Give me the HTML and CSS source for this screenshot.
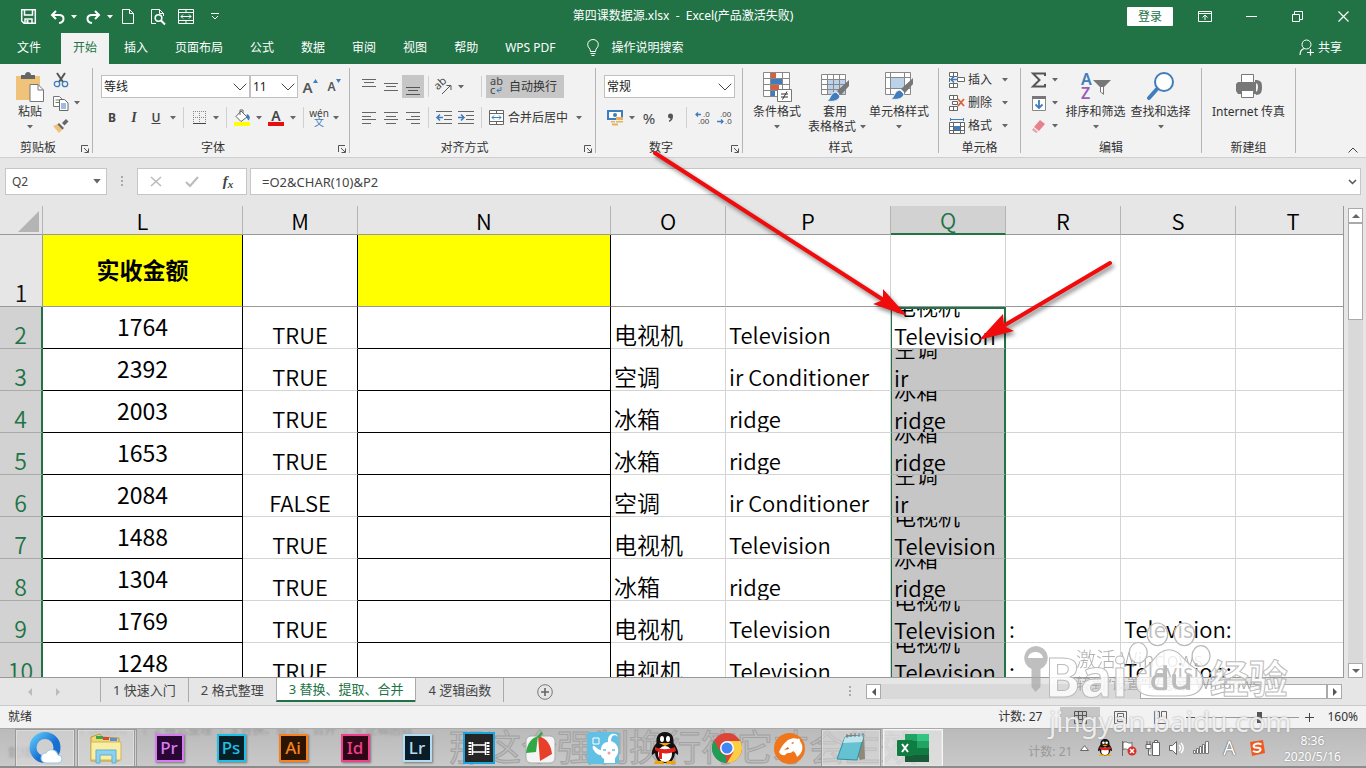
FILE: index.html
```html
<!DOCTYPE html>
<html lang="zh-CN">
<head>
<meta charset="utf-8">
<title>第四课数据源.xlsx - Excel</title>
<link rel="stylesheet" href="styles.css">
</head>
<body>
<svg class="defs" aria-hidden="true">
  <symbol id="caret" viewBox="0 0 6 4"><path d="M0 0h6L3 3.5z" fill="currentColor"/></symbol>
  <symbol id="chev" viewBox="0 0 14 8"><path d="M.7.7 7 7 13.300.7" fill="none" stroke="#444"/></symbol>
  <symbol id="launch" viewBox="0 0 8 8"><path d="M.5 7V.5H7M3 3l4 4M7.500 3.500v4h-4" fill="none" stroke="#555"/></symbol>
  <symbol id="brush" viewBox="0 0 24 24"><path d="M23 1v6l-8 9-4-4z" fill="#777"/><path d="M10 13l4 4c-1 5-7 6-13 5 4-2 3-8 9-9z" fill="#3f7dbd" stroke="#f2f2f2"/></symbol>
</svg>
<div class="app">
  <header class="titlebar">
    <div class="quick">
      <button aria-label="保存"><svg width="15" height="15" viewBox="0 0 15 15"><path d="M.7.700h13.600v13.600H3L.7 12z M3.500 1v5h8V1M4 14v-4h7v4" fill="none" stroke="#fff" stroke-width="1.500"/><path d="M5.500 11h2v3h-2z" fill="#fff"/></svg></button>
      <button aria-label="撤消"><svg width="15" height="14" viewBox="0 0 15 14"><path d="M6 1 2 5l4 4M2.500 5H9c6 0 6 7 0 8" fill="none" stroke="#fff" stroke-width="2"/></svg><svg class="caret"><use href="#caret"/></svg></button>
      <button aria-label="恢复"><svg width="15" height="14" viewBox="0 0 15 14"><path d="M9 1l4 4-4 4M12.500 5H6c-6 0-6 7 0 8" fill="none" stroke="#fff" stroke-width="2"/></svg><svg class="caret"><use href="#caret"/></svg></button>
      <button aria-label="新建"><svg width="12" height="15" viewBox="0 0 12 15"><path d="M.5.500h7l4 4v10H.5zM7.500.500v4h4" fill="none" stroke="#fff"/></svg></button>
      <button aria-label="打印预览"><svg width="15" height="16" viewBox="0 0 15 16"><path d="M5 14.500H.5V.500h8l4 4V7M8.500.500v4h4" fill="none" stroke="#fff"/><circle cx="7.500" cy="9" r="3.300" fill="none" stroke="#fff" stroke-width="1.600"/><path d="M10 11.500l4 4" stroke="#fff" stroke-width="2"/></svg></button>
      <button aria-label="合并"><svg width="16" height="15" viewBox="0 0 16 15"><path d="M.5.500h15v14H.5zM.5 3.500h15M.5 11.500h15M8 .5v3M8 11.500v3M3 7.500h10M5 5.500l-2 2 2 2M11 5.500l2 2-2 2" fill="none" stroke="#fff"/></svg></button>
      <button aria-label="自定义"><svg width="8" height="7" viewBox="0 0 8 7"><path d="M0 .5h8M1 3l3 3 3-3" fill="none" stroke="#fff"/></svg></button>
    </div>
    <div class="doc">第四课数据源.xlsx&nbsp; -&nbsp; Excel(产品激活失败)</div>
    <div class="win">
      <button class="login">登录</button>
      <button aria-label="功能区选项"><svg width="14" height="11" viewBox="0 0 14 11"><path d="M.5.500h13v10H.5zM.5 2.500h13M7 9V4.500M4.500 6.500 7 4l2.500 2.500" fill="none" stroke="#fff"/></svg></button>
      <button aria-label="最小化"><svg width="11" height="11" viewBox="0 0 11 11"><path d="M0 5.500h11" stroke="#fff"/></svg></button>
      <button aria-label="还原"><svg width="11" height="11" viewBox="0 0 11 11"><path d="M.5 3.500h7v7h-7zM2.500 3.500v-3h8v8h-3" fill="none" stroke="#fff"/></svg></button>
      <button aria-label="关闭"><svg width="11" height="11" viewBox="0 0 11 11"><path d="M.5.500l10 10M10.500.500l-10 10" stroke="#fff" stroke-width="1.200"/></svg></button>
    </div>
  </header>
  <nav class="tabs">
    <button class="file">文件</button>
    <button class="on">开始</button>
    <button>插入</button>
    <button>页面布局</button>
    <button>公式</button>
    <button>数据</button>
    <button>审阅</button>
    <button>视图</button>
    <button>帮助</button>
    <button>WPS PDF</button>
    <button class="tell"><svg width="12" height="17" viewBox="0 0 12 17"><path d="M3.500 12.500C3.500 9 .7 9 .7 5.500a5.300 5 0 0 1 10.600 0C11.300 9 8.500 9 8.500 12.500zM3.500 14.500h5M4.500 16.500h3" fill="none" stroke="#fff"/></svg>操作说明搜索</button>
    <button class="share"><svg width="15" height="17" viewBox="0 0 15 17"><circle cx="7.500" cy="5.500" r="4.500" fill="none" stroke="#fff"/><path d="M1 16c0-4 2-6 4.500-6.500M11.500 10v6.500M8 13.500h7" fill="none" stroke="#fff" stroke-width="1.200"/></svg>共享</button>
  </nav>

  <section class="ribbon" aria-label="开始">
    <div class="group g-clip">
      <div class="body">
        <button class="big paste"><svg width="30" height="30" viewBox="0 0 30 30"><path d="M1 4h24v24H1z" fill="#efc37a"/><path d="M6 3h4c0-4 6-4 6 0h4v4H6z" fill="#666"/><path d="M15 12.500h8l5.500 5.500v11.500H15z" fill="#fff" stroke="#777"/><path d="M23 12.500V18h5.500" fill="none" stroke="#777"/></svg><span>粘贴</span><svg class="caret"><use href="#caret"/></svg></button>
        <div class="stack">
          <button aria-label="剪切"><svg width="16" height="16" viewBox="0 0 16 16"><path d="M4 1l6 9M12 1L6 10" stroke="#555" stroke-width="2"/><g fill="none" stroke="#3f7dbd" stroke-width="1.300"><circle cx="4" cy="12" r="2.700"/><circle cx="12" cy="12" r="2.700"/></g></svg></button>
          <button aria-label="复制"><svg width="16" height="16" viewBox="0 0 16 16"><path d="M.5 1.500h6l3 3v7h-9zM2.500 5h4M2.500 7.500h4" fill="#fff" stroke="#777"/><path d="M6.500 4.500h5l3.500 3.500v7.500H6.500z" fill="#fff" stroke="#666"/><path d="M8 9h5M8 11h5M8 13h5" stroke="#3f7dbd"/></svg><svg class="caret"><use href="#caret"/></svg></button>
          <button aria-label="格式刷"><svg width="16" height="16" viewBox="0 0 16 16"><path d="M0 8l5-2 5 5-4 4z" fill="#efc37a"/><path d="M6 5l5 5-1.500 1.500-5-5zM9 5l4-4 2.500 2.500-4 4z" fill="#666"/></svg></button>
        </div>
      </div>
      <div class="foot">剪贴板<svg class="launch"><use href="#launch"/></svg></div>
    </div>

    <div class="group g-font">
      <div class="body rows">
        <div class="row">
          <label class="combo c-name"><select aria-label="字体"><option>等线</option></select><svg class="chev"><use href="#chev"/></svg></label>
          <label class="combo c-size"><select aria-label="字号"><option>11</option></select><svg class="chev"><use href="#chev"/></svg></label>
          <button class="w24 grow-l" aria-label="增大字号">A<svg class="up" width="5" height="4" viewBox="0 0 5 4"><path d="M0 4h5L2.500 0z" fill="#3f7dbd"/></svg></button>
          <button class="w24 grow-s" aria-label="减小字号">A<svg class="up" width="5" height="4" viewBox="0 0 5 4"><path d="M0 0h5L2.500 4z" fill="#3f7dbd"/></svg></button>
        </div>
        <div class="row">
          <button class="w22"><b>B</b></button>
          <button class="w22 it"><i>I</i></button>
          <button class="w22 un"><u>U</u></button>
          <button class="w12" aria-label="下划线选项"><svg class="caret"><use href="#caret"/></svg></button>
          <i class="vsep"></i>
          <button class="w22" aria-label="边框"><svg width="13" height="13" viewBox="0 0 13 13"><path d="M.5 0v12M6.500 0v12M12.500 0v12M0 .5h13M0 6.500h13" stroke="#888" stroke-dasharray="1 1"/><path d="M0 12.500h13" stroke="#444"/></svg></button>
          <button class="w12" aria-label="边框选项"><svg class="caret"><use href="#caret"/></svg></button>
          <i class="vsep"></i>
          <button class="w22" aria-label="填充颜色"><svg width="17" height="16" viewBox="0 0 17 16"><path d="M7 1l6 6-6 4.500L2 6.500zM6 5V0h3v3" fill="#fff" stroke="#666"/><path d="M13 4c4 2 3 5 1.500 6.500L12 7z" fill="#3f7dbd"/><path d="M0 12h16v4H0z" fill="#ff0"/></svg></button>
          <button class="w12" aria-label="填充选项"><svg class="caret"><use href="#caret"/></svg></button>
          <button class="w22 fcolor" aria-label="字体颜色">A</button>
          <button class="w12" aria-label="颜色选项"><svg class="caret"><use href="#caret"/></svg></button>
          <i class="vsep"></i>
          <button class="w22 wen">wén<em>文</em></button>
          <button class="w12" aria-label="拼音选项"><svg class="caret"><use href="#caret"/></svg></button>
        </div>
      </div>
      <div class="foot">字体<svg class="launch"><use href="#launch"/></svg></div>
    </div>

    <div class="group g-align">
      <div class="body rows">
        <div class="row">
          <button class="w22" aria-label="顶端对齐"><svg width="14" height="16" viewBox="0 0 14 16"><path d="M0 .5h14M2 3.500h10M0 7.500h14" stroke="#666"/></svg></button>
          <button class="w22" aria-label="垂直居中"><svg width="14" height="16" viewBox="0 0 14 16"><path d="M0 4.500h14M2 7.500h10M0 11.500h14" stroke="#666"/></svg></button>
          <button class="w22 pressed" aria-label="底端对齐"><svg width="14" height="16" viewBox="0 0 14 16"><path d="M0 8.500h14M2 11.500h10M0 15.500h14" stroke="#555"/></svg></button>
          <i class="vsep"></i>
          <button class="w22" aria-label="方向"><svg width="16" height="16" viewBox="0 0 16 16"><text x="0" y="9" font-size="11" fill="#444" transform="rotate(-42 4 8)">ab</text><path d="M6 15l8-8M10.500 6.500H15V11" fill="none" stroke="#555"/></svg></button>
          <button class="w12" aria-label="方向选项"><svg class="caret"><use href="#caret"/></svg></button>
          <i class="vsep far"></i>
          <button class="wide pressed"><svg width="15" height="17" viewBox="0 0 15 17"><text x="0" y="7" font-size="11" fill="#444">ab</text><text x="0" y="16" font-size="11" fill="#444">c</text><path d="M11 9v3.500H7M9 10.500l-2 2 2 2" fill="none" stroke="#3f7dbd"/></svg>自动换行</button>
        </div>
        <div class="row">
          <button class="w22" aria-label="左对齐"><svg width="14" height="12" viewBox="0 0 14 12"><path d="M0 .5h14M0 4.500h9M0 7.500h14M0 11.500h9" stroke="#666"/></svg></button>
          <button class="w22" aria-label="居中"><svg width="14" height="12" viewBox="0 0 14 12"><path d="M0 .5h14M2 4.500h10M0 7.500h14M2 11.500h10" stroke="#666"/></svg></button>
          <button class="w22" aria-label="右对齐"><svg width="14" height="12" viewBox="0 0 14 12"><path d="M0 .5h14M5 4.500h9M0 7.500h14M5 11.500h9" stroke="#666"/></svg></button>
          <i class="vsep"></i>
          <button class="w22" aria-label="减少缩进"><svg width="16" height="13" viewBox="0 0 16 13"><path d="M0 .5h16M8 4.500h8M8 8.500h8M0 12.500h16" stroke="#666"/><path d="M7 6.500H1M4 3.500l-3 3 3 3" fill="none" stroke="#3f7dbd" stroke-width="1.600"/></svg></button>
          <button class="w22" aria-label="增加缩进"><svg width="16" height="13" viewBox="0 0 16 13"><path d="M0 .5h16M8 4.500h8M8 8.500h8M0 12.500h16" stroke="#666"/><path d="M0 6.500h6M3 3.500l3 3-3 3" fill="none" stroke="#3f7dbd" stroke-width="1.600"/></svg></button>
          <i class="vsep"></i>
          <button class="wide"><svg width="15" height="15" viewBox="0 0 15 15"><path d="M.5.500h14v14H.5zM.5 3.500h14M.5 11.500h14M7.500.500v3M7.500 11.500v3" fill="#fff" stroke="#666"/><path d="M3 7.500h9M5 5.500l-2 2 2 2M10 5.500l2 2-2 2" fill="none" stroke="#3f7dbd"/></svg>合并后居中</button>
          <button class="w12" aria-label="合并选项"><svg class="caret"><use href="#caret"/></svg></button>
        </div>
      </div>
      <div class="foot">对齐方式<svg class="launch"><use href="#launch"/></svg></div>
    </div>

    <div class="group g-num">
      <div class="body rows">
        <div class="row">
          <label class="combo c-num"><select aria-label="数字格式"><option>常规</option></select><svg class="chev"><use href="#chev"/></svg></label>
        </div>
        <div class="row">
          <button class="w22" aria-label="会计数字格式"><svg width="17" height="16" viewBox="0 0 17 16"><path d="M1 1h14v8H1z" fill="#fff" stroke="#3f7dbd" stroke-width="2"/><circle cx="8" cy="5" r="2" fill="#3f7dbd"/><path d="M9 7h7v3H9zM9 11h7v1.500H9zM4 11h4v1.500H4zM5 13.500h6v2H5z" fill="#e5b15e"/></svg></button>
          <button class="w12" aria-label="货币选项"><svg class="caret"><use href="#caret"/></svg></button>
          <button class="w22 pct">%</button>
          <button class="w22 comma" aria-label="千位分隔样式"><svg width="6" height="8" viewBox="0 0 6 8"><path d="M0 2a2.500 2.500 0 0 1 5 0c0 3-1 5-4 6V6.500c1-.5 1.500-1 1.500-2A2.500 2.500 0 0 1 0 2z" fill="#555"/></svg></button>
          <i class="vsep"></i>
          <button class="w22" aria-label="增加小数位数"><svg width="15" height="14" viewBox="0 0 15 14"><text class="num" x="8" y="6" fill="#444">.0</text><text class="num" x="3" y="13" fill="#444">.00</text><path d="M6 3.500H1M3 1.500l-2 2 2 2" fill="none" stroke="#3f7dbd" stroke-width="1.300"/></svg></button>
          <button class="w22" aria-label="减少小数位数"><svg width="15" height="14" viewBox="0 0 15 14"><text class="num" x="3" y="6" fill="#444">.00</text><text class="num" x="8" y="13" fill="#444">.0</text><path d="M0 10.500h6M4 8.500l2 2-2 2" fill="none" stroke="#3f7dbd" stroke-width="1.300"/></svg></button>
        </div>
      </div>
      <div class="foot">数字<svg class="launch"><use href="#launch"/></svg></div>
    </div>

    <div class="group g-style">
      <div class="body">
        <button class="big"><svg width="30" height="30" viewBox="0 0 30 30"><path d="M1.500.500h26v24h-26zM1.500 6.500h26M1.500 12.500h26M1.500 18.500h26M8.500.500v24M20.500.500v24" fill="#fff" stroke="#888"/><path d="M9 1h5v5H9zM9 13h8v5H9z" fill="#d9603b"/><path d="M9 7h11v5H9zM9 19h4v5H9z" fill="#3f7dbd"/><path d="M15.500 17.500h14v12h-14z" fill="#fff" stroke="#777"/><path d="M19 22h7M19 25h7M25 19.500l-4.500 8" stroke="#333"/></svg><span>条件格式</span><svg class="caret"><use href="#caret"/></svg></button>
        <button class="big"><svg width="30" height="30" viewBox="0 0 30 30"><path d="M1.500 2.500h24v20h-24z" fill="#fff"/><path d="M8 8h18v15H8z" fill="#bcd2ea"/><path d="M1.500 2.500h24v20h-24zM1.500 7.500h24M1.500 12.500h24M1.500 17.500h24M7.500 2.500v20M13.500 2.500v20M19.500 2.500v20" fill="none" stroke="#888"/><use href="#brush" x="6" y="7" width="24" height="24"/></svg><span>套用</span><span class="second">表格格式<svg class="caret"><use href="#caret"/></svg></span></button>
        <button class="big"><svg width="30" height="30" viewBox="0 0 30 30"><path d="M1.500.500h25v22h-25zM1.500 5.500h25M1.500 16.500h25M6.500.500v22M20.500.500v22" fill="#fff" stroke="#888"/><path d="M7 6h13v10H7z" fill="#bcd2ea"/><use href="#brush" x="6" y="5" width="24" height="24"/></svg><span>单元格样式</span><svg class="caret"><use href="#caret"/></svg></button>
      </div>
      <div class="foot">样式</div>
    </div>

    <div class="group g-cell">
      <div class="body">
        <div class="stack text">
          <button><svg width="16" height="16" viewBox="0 0 16 16"><path d="M.5.500h8v4h-8zM4.500.500v4M.5 11.500h8v4h-8zM4.500 11.500v4M8.500 5.500h7v4h-7zM.5 10V6" fill="#fff" stroke="#666"/><path d="M9 7.500H2M5 4.500l-3 3 3 3" fill="none" stroke="#3f7dbd" stroke-width="1.600"/></svg>插入<svg class="caret"><use href="#caret"/></svg></button>
          <button><svg width="16" height="16" viewBox="0 0 16 16"><path d="M.5.500h8v4h-8zM4.500.500v4M.5 11.500h8v4h-8zM4.500 11.500v4M3.500 6.500h5v3h-5z" fill="#fff" stroke="#666"/><path d="M9 4l6 7M15 4l-6 7" stroke="#d9603b" stroke-width="1.800"/></svg>删除<svg class="caret"><use href="#caret"/></svg></button>
          <button><svg width="16" height="16" viewBox="0 0 16 16"><path d="M.5 4.500h15v11H.5zM.5 8.500h15M.5 12.500h15M4.500 4.500v11M11.500 4.500v11" fill="#fff" stroke="#666"/><path d="M5 8h6v4H5z" fill="#3f7dbd"/><path d="M2 1.500h12M1.500 0v3M14.500 0v3" stroke="#3f7dbd"/></svg>格式<svg class="caret"><use href="#caret"/></svg></button>
        </div>
      </div>
      <div class="foot">单元格</div>
    </div>

    <div class="group g-edit">
      <div class="body">
        <div class="stack">
          <button aria-label="自动求和"><svg width="16" height="16" viewBox="0 0 16 16"><path d="M14 4V1.500H2L8.500 8 2 14.500h12V12" fill="none" stroke="#555" stroke-width="2"/></svg><svg class="caret"><use href="#caret"/></svg></button>
          <button aria-label="填充"><svg width="16" height="16" viewBox="0 0 16 16"><path d="M1.500 1.500h13v14h-13z" fill="#fff" stroke="#888"/><path d="M1 1h14v3H1z" fill="#777"/><path d="M8 5v8M4.500 9.500 8 13l3.500-3.500" fill="none" stroke="#3f7dbd" stroke-width="1.800"/></svg><svg class="caret"><use href="#caret"/></svg></button>
          <button aria-label="清除"><svg width="16" height="16" viewBox="0 0 16 16"><path d="M9 2l5 4-6 7-5-4z" fill="#e8808f"/><path d="M2.500 10l4.500 4-2 1-4-3z" fill="#e8a2ac"/></svg><svg class="caret"><use href="#caret"/></svg></button>
        </div>
        <button class="big"><svg width="30" height="30" viewBox="0 0 30 30"><text x="0" y="13" font-size="16" font-weight="600" fill="#3f7dbd">A</text><text x="0" y="27" font-size="16" font-weight="600" fill="#9a5fb5">Z</text><path d="M12 8h18l-7 7v8l-4-3v-5z" fill="#777"/><path d="M20 15h2v6l-2-1z" fill="#fff"/></svg><span>排序和筛选</span><svg class="caret"><use href="#caret"/></svg></button>
        <button class="big"><svg width="30" height="30" viewBox="0 0 30 30"><circle cx="18" cy="10" r="9" fill="#fff" stroke="#3f7dbd" stroke-width="2"/><path d="M11 17l-8 9" stroke="#3f7dbd" stroke-width="4" stroke-linecap="round"/></svg><span>查找和选择</span><svg class="caret"><use href="#caret"/></svg></button>
      </div>
      <div class="foot">编辑</div>
    </div>

    <div class="group g-new">
      <div class="body">
        <button class="big"><svg width="30" height="30" viewBox="0 0 30 30"><path d="M4 10h18v12H4l-2-3v-7z" fill="#777"/><path d="M21 8c6 0 7 2 7 7s-1 8-6 8l-1-3c2 0 3-2 3-5s-1-4-3-4z" fill="#777"/><path d="M7.500 2.500h12v8h-12zM7.500 18.500h12v7h-12z" fill="#fff" stroke="#777"/></svg><span>Internet 传真</span></button>
      </div>
      <div class="foot">新建组</div>
    </div>
    <button class="collapse" aria-label="折叠功能区"><svg width="10" height="6" viewBox="0 0 10 6"><path d="M.5 5.500 5 1l4.500 4.500" fill="none" stroke="#444"/></svg></button>
  </section>

  <div class="formula">
    <label class="namebox"><input value="Q2" aria-label="名称框"><svg class="caret big-caret"><use href="#caret"/></svg></label>
    <span class="dots"></span>
    <div class="fx">
      <button aria-label="取消"><svg width="12" height="11" viewBox="0 0 12 11"><path d="M1 1l10 9M11 1L1 10" stroke="#bbb" stroke-width="1.600"/></svg></button>
      <button aria-label="输入"><svg width="14" height="11" viewBox="0 0 14 11"><path d="M1 6l4 4 8-9" fill="none" stroke="#bbb" stroke-width="2"/></svg></button>
      <button class="fxb">f<small>x</small></button>
    </div>
    <label class="fbar"><input value="=O2&amp;CHAR(10)&amp;P2" aria-label="编辑栏"><svg width="9" height="6" viewBox="0 0 9 6"><path d="M1 1l3.500 3.500L8 1" fill="none" stroke="#555" stroke-width="1.500"/></svg></label>
  </div>

  <main class="sheet">
    <div class="gridwrap">
      <table class="grid">
        <colgroup><col class="k-row"><col class="k-l"><col class="k-m"><col class="k-n"><col class="k-m"><col class="k-p"><col class="k-m"><col class="k-m"><col class="k-m"><col></colgroup>
        <thead><tr><th class="corner"><svg width="21" height="21" viewBox="0 0 21 21"><path d="M21 0v21H0z" fill="#b4b4b4"/></svg></th><th>L</th><th>M</th><th>N</th><th>O</th><th>P</th><th class="sel">Q</th><th>R</th><th>S</th><th>T</th></tr></thead>
        <tbody>
          <tr class="first"><th><div>1</div></th><td class="y"><div>实收金额</div></td><td class="m"></td><td class="y"></td><td></td><td></td><td></td><td></td><td></td><td></td></tr>
          <tr><th><div>2</div></th><td class="l"><div>1764</div></td><td class="m"><div>TRUE</div></td><td class="n"></td><td><div>电视机</div></td><td class="en"><div>Television</div></td><td class="q active"><div>电视机<br>Television</div></td><td></td><td></td><td></td></tr>
          <tr><th><div>3</div></th><td class="l"><div>2392</div></td><td class="m"><div>TRUE</div></td><td class="n"></td><td><div>空调</div></td><td class="en"><div>ir Conditioner</div></td><td class="q"><div>空调<br>ir</div></td><td></td><td></td><td></td></tr>
          <tr><th><div>4</div></th><td class="l"><div>2003</div></td><td class="m"><div>TRUE</div></td><td class="n"></td><td><div>冰箱</div></td><td class="en"><div>ridge</div></td><td class="q"><div>冰箱<br>ridge</div></td><td></td><td></td><td></td></tr>
          <tr><th><div>5</div></th><td class="l"><div>1653</div></td><td class="m"><div>TRUE</div></td><td class="n"></td><td><div>冰箱</div></td><td class="en"><div>ridge</div></td><td class="q"><div>冰箱<br>ridge</div></td><td></td><td></td><td></td></tr>
          <tr><th><div>6</div></th><td class="l"><div>2084</div></td><td class="m"><div>FALSE</div></td><td class="n"></td><td><div>空调</div></td><td class="en"><div>ir Conditioner</div></td><td class="q"><div>空调<br>ir</div></td><td></td><td></td><td></td></tr>
          <tr><th><div>7</div></th><td class="l"><div>1488</div></td><td class="m"><div>TRUE</div></td><td class="n"></td><td><div>电视机</div></td><td class="en"><div>Television</div></td><td class="q"><div>电视机<br>Television</div></td><td></td><td></td><td></td></tr>
          <tr><th><div>8</div></th><td class="l"><div>1304</div></td><td class="m"><div>TRUE</div></td><td class="n"></td><td><div>冰箱</div></td><td class="en"><div>ridge</div></td><td class="q"><div>冰箱<br>ridge</div></td><td></td><td></td><td></td></tr>
          <tr><th><div>9</div></th><td class="l"><div>1769</div></td><td class="m"><div>TRUE</div></td><td class="n"></td><td><div>电视机</div></td><td class="en"><div>Television</div></td><td class="q"><div>电视机<br>Television</div></td><td class="en"><div>:</div></td><td class="en"><div>Television:</div></td><td></td></tr>
          <tr><th><div>10</div></th><td class="l"><div>1248</div></td><td class="m"><div>TRUE</div></td><td class="n"></td><td><div>电视机</div></td><td class="en"><div>Television</div></td><td class="q"><div>电视机<br>Television</div></td><td class="en"><div>:</div></td><td class="en"><div>Television:</div></td><td></td></tr>
        </tbody>
      </table>
    </div>
    <div class="vscroll">
      <button aria-label="向上"><svg width="8" height="4" viewBox="0 0 8 4"><path d="M0 4h8L4 0z" fill="#666"/></svg></button>
      <div class="thumb"></div>
      <button class="end" aria-label="向下"><svg width="8" height="4" viewBox="0 0 8 4"><path d="M0 0h8L4 4z" fill="#666"/></svg></button>
    </div>
  </main>

  <div class="sheetbar">
    <button class="nav" aria-label="上一张"><svg width="4" height="8" viewBox="0 0 4 8"><path d="M4 0v8L0 4z" fill="#bbb"/></svg></button>
    <button class="nav" aria-label="下一张"><svg width="4" height="8" viewBox="0 0 4 8"><path d="M0 0v8l4-4z" fill="#bbb"/></svg></button>
    <div class="stabs">
      <button>1 快速入门</button><button>2 格式整理</button><button class="on">3 替换、提取、合并</button><button>4 逻辑函数</button>
    </div>
    <button class="add" aria-label="新工作表"><svg width="16" height="16" viewBox="0 0 16 16"><circle cx="8" cy="8" r="7.300" fill="none" stroke="#777"/><path d="M8 4v8M4 8h8" stroke="#666" stroke-width="1.600"/></svg></button>
    <span class="dots"></span>
    <div class="hscroll">
      <button aria-label="向左"><svg width="4" height="8" viewBox="0 0 4 8"><path d="M4 0v8L0 4z" fill="#555"/></svg></button>
      <div class="thumb"></div>
      <button aria-label="向右"><svg width="4" height="8" viewBox="0 0 4 8"><path d="M0 0v8l4-4z" fill="#555"/></svg></button>
    </div>
  </div>

  <footer class="status">
    <span>就绪</span>
    <span class="count">计数: 27</span>
    <div class="views">
      <button class="pressed" aria-label="普通"><svg width="13" height="13" viewBox="0 0 13 13"><path d="M.5.500h12v12H.5zM.5 4.500h12M.5 8.500h12M4.500.500v12M8.500.500v12" fill="none" stroke="#555"/></svg></button>
      <button aria-label="页面布局"><svg width="13" height="13" viewBox="0 0 13 13"><path d="M.5.500h12v12H.5zM3.500 2.500h6v8h-6zM5 5.500h3M5 7.500h3" fill="none" stroke="#666"/></svg></button>
      <button aria-label="分页预览"><svg width="13" height="13" viewBox="0 0 13 13"><path d="M.5.500h5v7h-5zM7.500.500h5v7h-5zM.5 7v5.500h12V7" fill="none" stroke="#666"/></svg></button>
    </div>
    <button class="zoomb" aria-label="缩小"><svg width="9" height="9" viewBox="0 0 9 9"><path d="M0 4.500h9" stroke="#555"/></svg></button>
    <input class="zoom" type="range" min="10" max="200" value="125" aria-label="缩放">
    <button class="zoomb" aria-label="放大"><svg width="9" height="9" viewBox="0 0 9 9"><path d="M0 4.500h9M4.500 0v9" stroke="#444"/></svg></button>
    <span class="pctv">160%</span>
  </footer>

  <div class="taskbar">
    <div class="ghost">1 快速入门 │ 2 格式整理 │ 3 替换、提取、合并 │ 4 逻辑函数</div>
    <div class="ghost low">就绪</div>
    <div class="subtitle">那这个强制换行符它才会生效</div>
    <div class="apps">
      <button class="open" aria-label="QQ浏览器"><svg width="34" height="34" viewBox="0 0 34 34"><defs><linearGradient id="qb" x1="0" y1="0" x2="1" y2="1"><stop offset="0" stop-color="#5cc4f6"/><stop offset=".6" stop-color="#176fd0"/></linearGradient></defs><circle cx="17" cy="16.500" r="12" fill="none" stroke="url(#qb)" stroke-width="7"/><path d="M18 32a5 5 0 0 1 0-10 6.500 6.500 0 0 1 12 2 4 4 0 0 1 0 8z" fill="#fff" stroke="#9cc4e8"/></svg></button>
      <button class="open stackd" aria-label="资源管理器"><svg width="34" height="32" viewBox="0 0 34 32"><path d="M2 5l9-3 2 3 17 1v23H2z" fill="#f1d774" stroke="#b79b3b"/><path d="M7 4h7v3H7z" fill="#3da64a"/><path d="M14 5h6v3h-6z" fill="#d64a3a"/><path d="M21 6h7v3h-7z" fill="#5b8ede"/><path d="M2 10h30v18H2z" fill="#faeea2" stroke="#cdb55a"/><path d="M7 31V18h20v13h-4v-8H11v8z" fill="#8fd0ee" stroke="#5eafd4"/></svg></button>
      <button aria-label="Premiere"><span class="adobe pr">Pr</span></button>
      <button aria-label="Photoshop"><span class="adobe ps">Ps</span></button>
      <button aria-label="Illustrator"><span class="adobe ai">Ai</span></button>
      <button aria-label="InDesign"><span class="adobe id">Id</span></button>
      <button aria-label="Lightroom"><span class="adobe lr">Lr</span></button>
      <button aria-label="视频编辑"><svg width="32" height="32" viewBox="0 0 32 32"><path d="M1 1h30v30H1z" fill="#252525" stroke="#1ba4e0" stroke-width="2"/><path d="M7 10v13M25 10v13" stroke="#fff" stroke-width="3" stroke-dasharray="2 1"/><path d="M9.500 10v13M22.500 10v13M10 13h12M10 20h12" fill="none" stroke="#fff" stroke-width="1.500"/></svg></button>
      <button aria-label="录屏"><svg width="32" height="32" viewBox="0 0 32 32"><rect x="1" y="4" width="29" height="27" rx="5" fill="#f4f4f4" stroke="#aaa"/><path d="M1 21C2 11 7 6 13 4l-2 16z" fill="#31a843"/><path d="M13 4c9 2 13 9 14 18L15 29z" fill="#e6402a"/><path d="M12 5l4-5 2 1-3 5z" fill="#31a843"/></svg></button>
      <button aria-label="哔哩"><svg width="32" height="32" viewBox="0 0 32 32"><rect width="32" height="32" rx="3" fill="#62c0e4"/><path d="M21 10C20 0 30 0 31 5c-3-3-7-2-7 4 6 2 8 7 7 12-1 3-3 4-3 6v4H17v-4c-2-1-3-3-3-4-4 1-10-7-8-9 2-1 4 4 8 4 0-5 3-8 7-8z" fill="#fff"/><path d="M16 18h3M25 18h3" stroke="#62c0e4" stroke-width="1.500"/><circle cx="22" cy="21" r="1.500" fill="#f0a0a0"/><path d="M6 6h6v6H6z" fill="none" stroke="#fff"/></svg></button>
      <button aria-label="QQ"><svg width="28" height="32" viewBox="0 0 28 32"><path d="M14 0C7 0 5 5 5.500 11 3 14 0 19 1 23l3-2c1 7 4 10 10 10s9-3 10-10l3 2c1-4-2-9-4.500-12C23 5 21 0 14 0z" fill="#111"/><ellipse cx="14" cy="22" rx="7" ry="8" fill="#fff"/><ellipse cx="11" cy="7" rx="2" ry="3" fill="#fff"/><ellipse cx="17" cy="7" rx="2" ry="3" fill="#fff"/><path d="M8 11h12l-6 3z" fill="#f5a300"/><path d="M4 15c7 3 13 3 20 0l1 4c-4 2-10 3-14 2v6H8v-7l-4-2z" fill="#e2231a"/><path d="M4 29h8l1 3H3zM16 29h8l1 3H15z" fill="#f5a300"/></svg></button>
      <button aria-label="Chrome"><svg width="30" height="30" viewBox="0 0 30 30"><circle cx="15" cy="15" r="15" fill="#dc4437"/><path d="M2 7.500 9 20l4 2 2 8A15 15 0 0 1 2 7.500z" fill="#1c9e57"/><path d="M15 8h13.300A15 15 0 0 1 15 30l6.500-11z" fill="#fcce45"/><circle cx="15" cy="15" r="7" fill="#fff"/><circle cx="15" cy="15" r="5.500" fill="#4286f5"/></svg></button>
      <button aria-label="猎豹"><svg width="31" height="31" viewBox="0 0 31 31"><circle cx="15.500" cy="15.500" r="15.500" fill="#f0761c"/><path d="M5 19c2-5 5-9 9-12 4-2 7-2 10-1 1-1 2 0 2 2 4 5 3 12-3 16-1-3-2-5-4-6-2 3-5 1-7 3-1 2-5 2-7-2z" fill="#fff"/><path d="M10 17l4-3 1 2zM17 10l3-1-1 2z" fill="#d85f10"/></svg></button>
      <button class="open" aria-label="记事本"><svg width="30" height="30" viewBox="0 0 30 30"><path d="M10 2h18l1 24-5 1z" fill="#8e8a77"/><path d="M9 4l19-2-7 25-20-1z" fill="#65c2d2" stroke="#2e8fa3"/><path d="M9 4l19-2-2 7-19 1z" fill="#bfe5eb"/><path d="M11 1v4M15 0v4M19 0v4M23 0v4M27 0v4" stroke="#777"/></svg></button>
      <button class="open cur" aria-label="Excel"><svg width="32" height="28" viewBox="0 0 32 28"><path d="M8 0h12v7H8z" fill="#21a366"/><path d="M20 0h12v7H20z" fill="#33c481"/><path d="M8 7h12v7H8zM8 14h12v14H8z" fill="#107c41"/><path d="M20 7h12v7H20z" fill="#21a366"/><path d="M20 14h12v7H20z" fill="#107c41"/><path d="M8 21h24v7H8z" fill="#185c37"/><rect y="6" width="16" height="16" rx="1" fill="#107c41"/><path d="M5 10l6 8M11 10l-6 8" stroke="#fff" stroke-width="2"/></svg></button>
    </div>
    <div class="tray">
      <span class="faint">计数: 21</span>
      <button aria-label="显示隐藏图标"><svg width="9" height="6" viewBox="0 0 9 6"><path d="M.5 5.500h8L4.500.700z" fill="#fff" stroke="#666"/></svg></button>
      <button aria-label="QQ"><svg width="16" height="17" viewBox="0 0 28 32"><path d="M14 0C7 0 5 5 5.500 11 3 14 0 19 1 23l3-2c1 7 4 10 10 10s9-3 10-10l3 2c1-4-2-9-4.500-12C23 5 21 0 14 0z" fill="#111"/><ellipse cx="14" cy="23" rx="7" ry="7" fill="#fff"/><circle cx="11" cy="7" r="2.500" fill="#fff"/><circle cx="17" cy="7" r="2.500" fill="#fff"/><path d="M8 11h12l-6 3z" fill="#f5a300"/><path d="M4 14c7 3 13 3 20 0l1 5c-7 3-14 3-21 0z" fill="#e2231a"/><path d="M4 29h8l1 3H3zM16 29h8l1 3H15z" fill="#f5a300"/></svg></button>
      <button aria-label="操作中心"><svg width="16" height="16" viewBox="0 0 16 16"><path d="M1.500 1v15M2 2.500c4-2 5 2 9 0v7c-4 2-5-2-9 0z" fill="#fff" stroke="#666"/><circle cx="11" cy="11" r="4.500" fill="#d5332a"/><path d="M9 9l4 4M13 9l-4 4" stroke="#fff" stroke-width="1.500"/></svg></button>
      <button aria-label="电源"><svg width="16" height="16" viewBox="0 0 16 16"><path d="M7.500 2.500h7v13h-7zM9.500.500h3v2h-3zM1 4.500h5v4H1zM2 1v3M5 1v3M3.500 9v6h3" fill="#fff" stroke="#666"/></svg></button>
      <button aria-label="音量"><svg width="16" height="14" viewBox="0 0 16 14"><path d="M.5 4.500h3l4-4v13l-4-4h-3z" fill="#fff" stroke="#666"/><path d="M10 4c2 2 2 4 0 6M12 2c3 3 3 7 0 10" fill="none" stroke="#fff" stroke-width="1.500"/></svg></button>
      <button aria-label="网络"><svg width="16" height="13" viewBox="0 0 16 13"><path d="M.5 9.500h2v3h-2zM3.500 7.500h2v5h-2zM6.500 5.500h2v7h-2zM9.500 3.500h2v9h-2zM12.500.500h3v12h-3z" fill="#fff" stroke="#777"/></svg></button>
      <button class="ime">A</button>
      <button aria-label="搜狗"><svg width="16" height="16" viewBox="0 0 16 16"><path d="M1 2l13-2 2 13-13 3z" fill="#f1591f"/><path d="M12.500 4.500C8 2 3 5 5 7s6-.5 6.500 2-4 4-7.500 2" fill="none" stroke="#fff" stroke-width="2"/></svg></button>
      <div class="clock"><span>8:36</span><span>2020/5/16</span></div>
      <span class="faint end">110%</span>
    </div>
  </div>

  <svg class="arrows" width="1366" height="768" viewBox="0 0 1366 768" aria-hidden="true">
    <g fill="#f00c0c" stroke="#f00c0c">
      <path d="M655 153 885 301M1110 263 1000 328" stroke-width="4" stroke-linecap="round"/>
      <path d="M907 316 873 304 883 300 883 289z M979 340 1003 314 1004 326 1014 331z" stroke="none"/>
    </g>
  </svg>

  <div class="activate">
    <svg width="28" height="48" viewBox="0 0 28 48"><path d="M13.500 1a12 12 0 0 1 5 23v18l-5 5-4-5V24a12 12 0 0 1 4-23zM6 13h15c-1-8-14-8-15 0z" fill="#aaa" fill-rule="evenodd"/></svg>
    <div><strong>激活 Windows</strong><span>转到“设置”以激活 Windows。</span></div>
  </div>
  <div class="mark">
    <div class="brand"><span class="bai">Bai</span><svg width="82" height="78" viewBox="0 0 64 76" preserveAspectRatio="none"><g fill="#fff" fill-opacity=".75" stroke="#bbb"><ellipse cx="23" cy="13" rx="8" ry="11"/><ellipse cx="44" cy="13" rx="8" ry="11"/><ellipse cx="8" cy="31" rx="7" ry="10"/><ellipse cx="57" cy="34" rx="7" ry="10"/><path d="M32 28c9 0 11 11 19 17 13 9 8 28-6 28H20C4 73 2 56 13 46c8-7 10-18 19-18z"/></g><g fill="none" stroke="#bbb" stroke-width="3"><path d="M29 43v24M29 53h-5c-6 0-6 13 0 13h5M36 52v9c0 6 9 6 11 0v-9M47 52v15"/></g></svg><span class="jy">经验</span></div>
    <div class="url">jingyan.baidu.com</div>
  </div>
</div>
</body>
</html>
```
FILE: styles.css
```css
* { box-sizing: border-box; }
body { margin: 0; font: 12px/16px "Noto Sans", "Noto Sans CJK SC", sans-serif; color: #333; }
button { margin: 0; padding: 0; border: 0; background: none; font: inherit; color: inherit; display: flex; align-items: center; justify-content: center; white-space: nowrap; flex: none; }
input, select { font: inherit; color: inherit; border: 0; background: none; margin: 0; outline: 0; min-width: 0; appearance: none; }
svg { flex: none; display: block; overflow: visible; }
svg text { font-family: "Noto Sans", sans-serif; }
svg .num { font: 8px "Liberation Sans", sans-serif; }
.defs { position: absolute; width: 0; height: 0; }
.caret { width: 6px; height: 4px; color: #666; }
.app { position: relative; height: 100vh; min-width: 1300px; display: flex; flex-direction: column; overflow: hidden; background: #e6e6e6; }

.titlebar { display: grid; grid-template-columns: 1fr auto 1fr; align-items: center; height: 33px; background: #217346; color: #fff; }
.quick { display: flex; align-items: center; gap: 9px; padding-left: 21px; }
.quick button { gap: 6px; }
.quick .caret { color: #fff; }
.quick button:first-child { margin-right: 5px; }
.quick button:nth-child(odd):nth-child(n+5) { margin-left: 8px; }
.quick button:nth-child(6) { margin-left: 3px; }
.doc { padding-bottom: 2px; }
.win { display: flex; justify-content: flex-end; align-items: center; }
.win button { width: 46px; height: 30px; }
.win .login { height: 19px; background: #fff; color: #217346; border-radius: 1px; margin-right: 9px; }

.tabs { display: flex; gap: 3px; height: 31px; padding-left: 5px; background: #217346; color: #fff; }
.tabs button { padding: 0 12px 2px; }
.tabs .file { margin-right: 5px; }
.tabs .on { background: #f2f2f2; color: #217346; }
.tabs .tell { gap: 13px; padding-left: 16px; }
.tabs .share { gap: 4px; margin-left: auto; padding-right: 24px; }

.ribbon { display: flex; height: 94px; padding: 4px 0; background: #f2f2f2; border-bottom: 1px solid #cfcfcf; }
.group { display: flex; flex-direction: column; border-right: 1px solid #b5b5b5; }
.body { display: flex; height: 71px; }
.foot { position: relative; height: 14px; text-align: center; line-height: 18px; }
.launch { position: absolute; right: 3px; top: 6px; width: 8px; height: 8px; }
.g-clip { width: 93px; }
.g-font { width: 257px; }
.g-align { width: 246px; }
.g-num { width: 147px; }
.g-clip .foot, .g-font .foot, .g-align .foot, .g-num .foot { padding-right: 16px; }
.g-style { width: 196px; }
.g-cell { width: 82px; }
.g-edit { width: 181px; }
.g-new { width: 94px; }
.g-new .body { justify-content: center; }
.collapse { margin: auto 8px 0 auto; }
.big { flex-direction: column; justify-content: flex-start; padding-top: 4px; }
.big > span { margin-top: 2px; line-height: 16px; }
.big > .caret { margin-top: 5px; }
.big .second { display: flex; align-items: center; gap: 4px; margin-top: -1px; margin-left: 4px; }
.paste { margin-left: 15px; width: 30px; }
.stack { display: flex; flex-direction: column; margin-left: 8px; }
.stack button { height: 23px; gap: 5px; justify-content: flex-start; }
.stack.text { margin-left: 10px; }
.stack.text button { gap: 3px; }
.stack.text .caret { margin-left: 7px; }
.g-style .body { padding-left: 8px; }
.g-style .big { width: 64px; }
.g-style .big:first-child { width: 52px; }
.g-edit .stack { width: 32px; margin-left: 10px; }
.g-edit .big { width: 65px; }

.rows { flex-direction: column; padding: 7px 0 0 8px; gap: 8px; }
.row { display: flex; align-items: center; height: 23px; }
.combo { display: grid; height: 23px; background: #fff; border: 1px solid #c0c0c0; align-items: center; color: #222; }
.combo select { grid-area: 1 / 1; width: 100%; height: 21px; padding: 0 2px; }
.combo .chev { grid-area: 1 / 1; justify-self: end; width: 14px; height: 8px; margin-right: 2px; pointer-events: none; }
.c-name { width: 149px; }
.c-size { width: 48px; }
.c-num { width: 131px; }
.w22 { width: 22px; height: 23px; color: #444; }
.w24 { width: 24px; height: 23px; color: #555; align-items: center; }
.w12 { width: 12px; height: 23px; }
.grow-l { font-size: 15px; font-weight: 600; }
.grow-s { font-size: 12px; font-weight: 600; }
.up { align-self: flex-start; margin-top: 4px; }
.it { font-family: "Liberation Serif", serif; font-weight: 700; font-size: 14px; }
.un { font-weight: 600; }
.vsep { width: 1px; height: 21px; margin: 0 4px; background: #d0d0d0; }
.vsep.far { margin-left: 14px; }
.fcolor { font-weight: 600; font-size: 14px; line-height: 11px; border-bottom: 4px solid #e60f0f; height: 17px; width: 16px; margin: 0 3px; }
.wen { flex-direction: column; font-size: 10px; line-height: 8px; }
.wen em { font-style: normal; color: #3f7dbd; line-height: 10px; }
.pressed { background: #c6c6c6; }
.wide { height: 23px; gap: 4px; padding: 0 5px 0 3px; color: #333; }
.wide.pressed { padding: 0 7px 0 4px; }
.pct { font-size: 15px; }

.formula { display: flex; height: 48px; padding: 10px 5px 11px; color: #444; }
.namebox { display: flex; align-items: center; width: 102px; background: #fff; border: 1px solid #c6c6c6; padding: 0 5px 0 6px; }
.namebox input { flex: 1; padding: 0; }
.big-caret { width: 8px; height: 5px; }
.dots { width: 2px; height: 11px; margin: auto 14px; background: repeating-linear-gradient(#aaa 0 2px, transparent 2px 4px); }
.fx { display: flex; width: 110px; background: #fff; border: 1px solid #c6c6c6; margin-right: 3px; }
.fx button { width: 36px; }
.fx .fxb { font: italic 700 15px "Liberation Serif", serif; }
.fxb small { font-size: 11px; padding-top: 4px; }
.fbar { display: flex; align-items: center; flex: 1; background: #fff; border: 1px solid #c6c6c6; padding-right: 3px; }
.fbar input { flex: 1; padding: 0 11px; font-size: 13px; }

.sheet { display: flex; flex: 1; min-height: 0; }
.gridwrap { flex: 1; min-width: 0; overflow: hidden; border-right: 1px solid #999; border-bottom: 1px solid #999; background: #fff; }
.grid { width: calc(100% + 8px); table-layout: fixed; border-collapse: separate; border-spacing: 0; color: #000; font: 350 23px/30px "Noto Sans CJK SC", sans-serif; }
.k-row { width: 43px; }
.k-l { width: 200px; }
.k-m { width: 115px; }
.k-n { width: 253px; }
.k-p { width: 165px; }
.grid th, .grid td { padding: 0; font-weight: 350; border-right: 1px solid #d4d4d4; border-bottom: 1px solid #d4d4d4; }
.grid thead th { height: 29px; background: #e6e6e6; border-color: #999; border-right-color: #b5b5b5; line-height: 28px; font-size: 22px; }
.grid thead .sel { background: #d2d2d2; color: #217346; border-bottom: 2px solid #217346; line-height: 27px; }
.corner svg { margin: 3px 0 0 18px; }
.grid td div, .grid tbody th div { height: 41px; overflow: hidden; line-height: 30px; padding: 12px 3px 0; white-space: nowrap; }
.grid .en div, .grid .m div { font-size: 22px; }
.grid tbody th { background: #d2d2d2; color: #217346; border-right: 2px solid #217346; border-bottom-color: #aaa; }
.grid tbody th div { padding-left: 0; padding-right: 0; }
.grid .first th { background: #e6e6e6; color: #111; border-right: 1px solid #999; vertical-align: bottom; }
.grid .first th, .grid .first td { height: 72px; border-bottom-color: #999; }
.grid .y { background: #ff0; border-right-color: #000; text-align: center; }
.grid .y div { font-weight: 700; padding-top: 4px; }
.grid .m { text-align: center; border-right-color: #000; }
.grid .l, .grid .n { border-right-color: #000; border-bottom-color: #000; }
.grid .l { text-align: center; font-weight: 400; }
.grid .l div { padding-top: 4px; }
.grid .q { background: #c6c6c6; border-left: 1px solid #217346; border-right: 2px solid #217346; border-bottom-color: #b0b0b0; font-size: 22px; }
.grid .q div { padding: 0 2px; }
.grid .q div::before { content: ""; display: block; margin-top: -17px; }
.grid .active { background: #fff; border-top: 2px solid #217346; }
.grid .active div { height: 39px; }
.grid .active div::before { margin-top: -19px; }
.vscroll { display: flex; flex-direction: column; width: 15px; margin: 2px 3px 0 4px; background: #d9d9d9; }
.vscroll button { height: 15px; background: #fff; border: 1px solid #aaa; }
.vscroll .thumb { height: 97px; background: #fff; border: 1px solid #aaa; }
.vscroll .end { margin-top: auto; }

.sheetbar { display: flex; align-items: center; height: 28px; padding: 0 24px 0 28px; border-bottom: 1px solid #cacaca; color: #444; }
.nav { margin-right: 24px; }
.stabs { display: flex; align-self: stretch; margin-left: 16px; padding-bottom: 3px; font-size: 13px; }
.stabs button { padding: 0 12px; border-left: 1px solid #aaa; }
.stabs button:last-child { border-right: 1px solid #aaa; }
.stabs .on { background: #fff; color: #217346; border-bottom: 2px solid #217346; }
.add { margin-left: 33px; }
.sheetbar .dots { margin: 0 15px 0 auto; }
.hscroll { display: flex; width: 476px; height: 15px; background: #d9d9d9; }
.hscroll button { width: 15px; background: #fff; border: 1px solid #aaa; }
.hscroll .thumb { width: 187px; margin-left: auto; background: #fff; border: 1px solid #aaa; }

.status { display: flex; align-items: center; height: 22px; padding: 0 8px; background: #f2f2f2; }
.count { margin-left: auto; }
.views { display: flex; margin: 0 4px 0 18px; }
.views button { width: 40px; height: 20px; }
.zoomb { width: 12px; }
.zoom { width: 99px; height: 20px; margin: 0 4px; }
.zoom::-webkit-slider-runnable-track { height: 1px; background: #999; }
.zoom::-webkit-slider-thumb { appearance: none; width: 5px; height: 11px; margin-top: -5px; background: #555; }
.pctv { margin-left: 12px; }

.taskbar { position: relative; display: flex; height: 40px; background: linear-gradient(#bababa, #c9c9c9); border-bottom: 2px solid #8c8c8c; border-top: 1px solid #aaa; overflow: hidden; }
.ghost { position: absolute; left: 78px; top: -7px; color: #999; white-space: pre; filter: blur(1px); }
.ghost.low { left: 8px; top: 16px; }
.subtitle { position: absolute; left: 449px; top: -4px; font: 36px/40px "Noto Sans CJK SC", sans-serif; color: #bdbdbd; -webkit-text-stroke: 1px #a2a2a2; white-space: nowrap; }
.apps { position: relative; display: flex; padding-left: 15px; gap: 2px; }
.apps button { width: 60px; height: 38px; }
.apps .open { border: 1px solid #999; background: #dddddd80; box-shadow: inset 0 0 0 1px #eeeeee80; }
.apps .cur { border-color: #f5f5f5; background: #e6e6e6b0; }
.apps .stackd { border-right: 3px double #999; }
.adobe { width: 29px; height: 28px; border: 2px solid; font-weight: 500; font-size: 17px; line-height: 23px; text-align: center; box-shadow: 1px 1px 2px #777; }
.pr { color: #d67bf0; background: #2a0634; }
.ps { color: #1fc0e8; background: #061e26; }
.ai { color: #f5821f; background: #2b1500; }
.id { color: #f03f8c; background: #2e0616; }
.lr { color: #b4dcf0; background: #0a1c27; }
.tray { position: relative; display: flex; align-items: center; gap: 8px; margin-left: auto; padding-right: 8px; }
.faint { color: #999; margin-top: 8px; }
.tray .ime { font-size: 19px; color: #fff; text-shadow: 0 0 1px #444, 0 0 1px #444; width: 20px; margin: 0 2px; }
.clock { display: flex; flex-direction: column; text-align: center; color: #fff; width: 66px; margin: 2px 0 0 6px; text-shadow: 0 0 2px #888; }
.faint.end { margin-left: -26px; z-index: -1; }

.arrows { position: absolute; left: 0; top: 0; filter: drop-shadow(2px 3px 2px #0007); pointer-events: none; }
.activate { position: absolute; left: 1022px; top: 645px; display: flex; gap: 26px; color: #999; opacity: .75; pointer-events: none; }
.activate div { display: flex; flex-direction: column; }
.activate strong { font: 300 20px/28px "Noto Sans CJK SC", sans-serif; }
.activate span { font-size: 15px; line-height: 20px; white-space: nowrap; }
.mark { position: absolute; left: 1045px; top: 621px; color: #ffffffd0; pointer-events: none; white-space: nowrap; }
.brand { display: flex; align-items: flex-end; height: 78px; font-family: "Noto Sans", "Noto Sans CJK SC", sans-serif; font-weight: 700; -webkit-text-stroke: 1px #bbb; }
.bai { font-size: 53px; line-height: 44px; }
.jy { font-size: 39px; line-height: 42px; }
.url { font: 28px/28px "Noto Sans", sans-serif; margin: 8px 0 0 4px; text-shadow: 0 0 2px #999; }
```
